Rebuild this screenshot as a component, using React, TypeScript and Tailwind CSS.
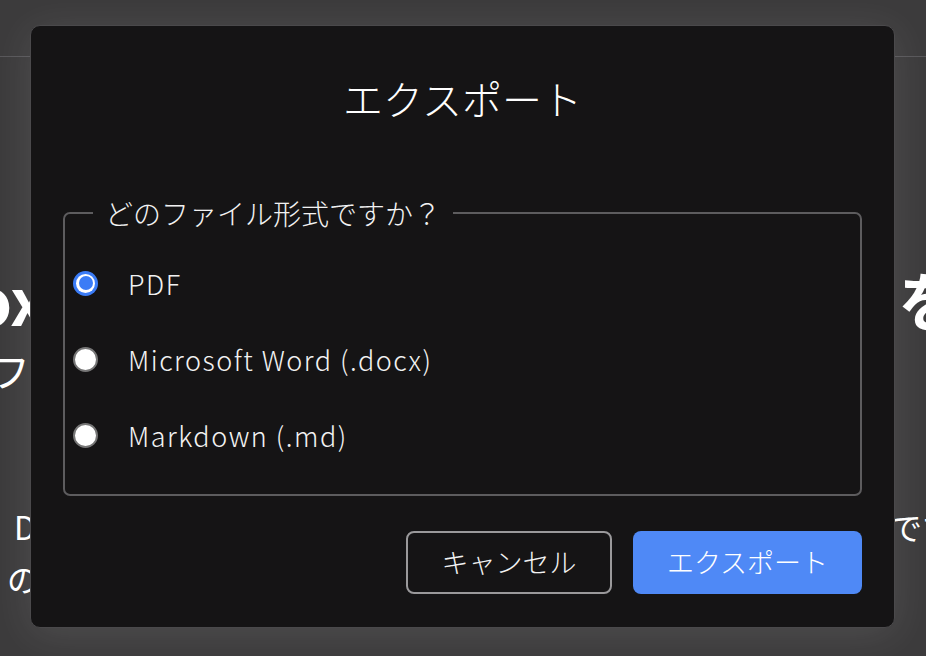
import { useState } from "react";

const FORMATE = [
  { id: "pdf", label: "PDF" },
  { id: "docx", label: "Microsoft Word (.docx)" },
  { id: "md", label: "Markdown (.md)" },
];

function Radio({ checked }: { checked: boolean }) {
  return checked ? (
    <span className="flex h-[25px] w-[25px] shrink-0 items-center justify-center rounded-full bg-[#3b7cf6]">
      <span className="flex h-[19px] w-[19px] items-center justify-center rounded-full bg-white">
        <span className="h-[14px] w-[14px] rounded-full bg-[#3b7cf6]" />
      </span>
    </span>
  ) : (
    <span className="h-[25px] w-[25px] shrink-0 rounded-full border-2 border-[#767676] bg-white" />
  );
}

export default function App() {
  const [format, setFormat] = useState("pdf");

  return (
    <div
      className="relative h-[656px] w-[926px] overflow-hidden bg-[#3c3b3c] text-white"
      style={{ fontFamily: '"Noto Sans CJK JP", "Noto Sans", sans-serif' }}
    >
      {/* Seite hinter dem Dialog */}
      <div className="h-[57px] border-b border-[#58575a]" />
      <div className="mt-[205px] flex h-[72px] items-center justify-between whitespace-nowrap text-[64px] font-bold leading-none">
        <span className="-ml-[28px]">ox</span>
        <span className="-mr-[36px]">を</span>
      </div>
      <div className="flex h-[72px] items-center whitespace-nowrap text-[40px] leading-none">
        <span className="-ml-[10px]">フ</span>
      </div>
      <div className="mt-[100px] flex h-[40px] items-center justify-between whitespace-nowrap text-[32px] leading-none">
        <span className="ml-[14px]">D</span>
        <span className="-mr-[28px]">です</span>
      </div>
      <div className="mt-[12px] flex h-[40px] items-center whitespace-nowrap text-[32px] leading-none">
        <span className="ml-[7px]">の</span>
      </div>

      {/* Dialog */}
      <div className="absolute inset-0 flex items-start pl-[30px] pt-[25px]">
        <div className="flex h-[603px] w-[865px] flex-col rounded-[10px] border border-[#4a494b] bg-[#151415] px-[32px] pb-[33px] font-light shadow-[0_6px_40px_rgba(255,255,255,0.10)]">
          <h2 className="mt-[46px] text-center text-[40px] font-light leading-[52px] text-white">
            エクスポート
          </h2>

          <fieldset className="mt-[72px] h-[300px] rounded-[7px] border-2 border-[#5d5c5e] pl-[8px] pr-4 pt-[15px]">
            <legend className="ml-[20px] px-[12px] text-[28px] leading-[34px] text-[#f2f2f2]">
              どのファイル形式ですか？
            </legend>
            {FORMATE.map((f) => (
              <label
                key={f.id}
                className="flex h-[76px] cursor-pointer items-center gap-[30px]"
                onClick={() => setFormat(f.id)}
              >
                <Radio checked={format === f.id} />
                <span className="text-[27px] leading-none tracking-[0.055em] text-[#f2f2f2]">{f.label}</span>
              </label>
            ))}
          </fieldset>

          <div className="mt-auto flex justify-end gap-[21px]">
            <button
              type="button"
              className="h-[63px] w-[206px] rounded-[8px] border-2 border-[#9a999b] text-[27px] text-[#f2f2f2]"
            >
              キャンセル
            </button>
            <button
              type="button"
              className="h-[63px] w-[229px] rounded-[8px] bg-[#4f89f6] text-[27px] text-white"
            >
              エクスポート
            </button>
          </div>
        </div>
      </div>
    </div>
  );
}
